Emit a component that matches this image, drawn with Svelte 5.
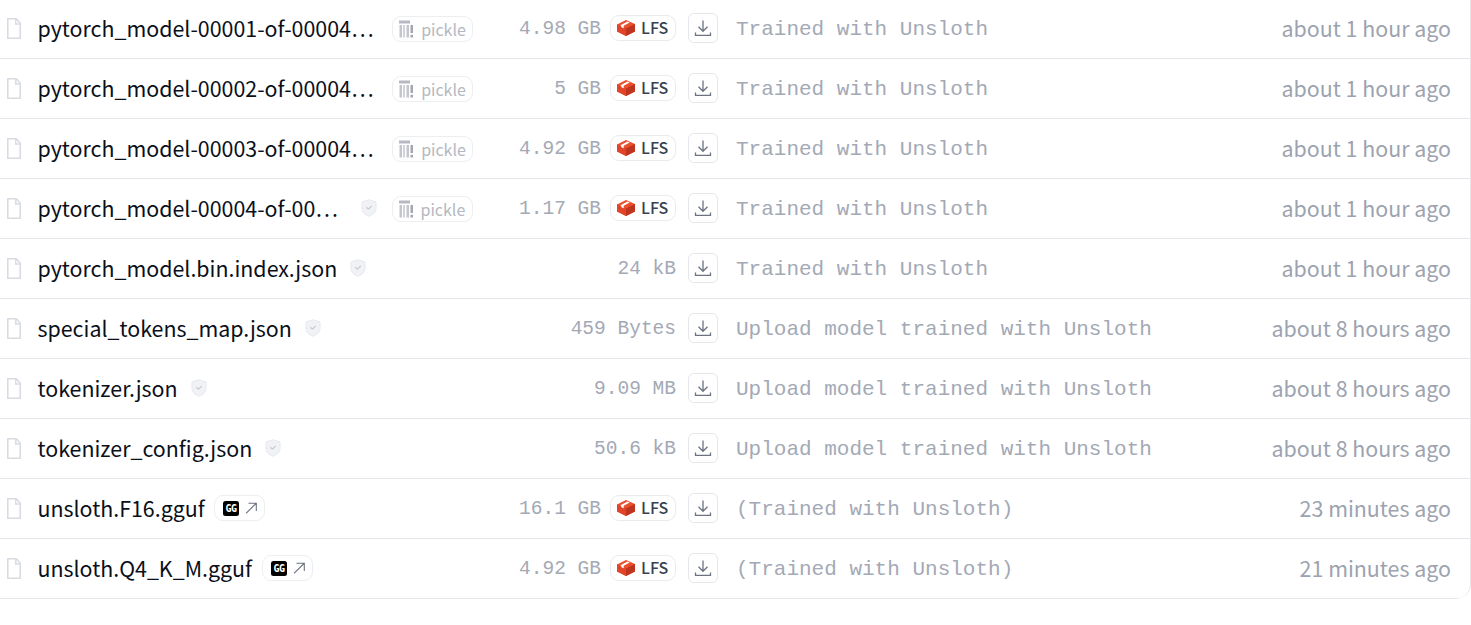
<script>
  const p = 'pickle', l = 'lfs', g = 'gguf';
  const h1 = 'about 1 hour ago', h8 = 'about 8 hours ago';
  const t1 = 'Trained with Unsloth', t8 = 'Upload model trained with Unsloth', t3 = '(Trained with Unsloth)';
  const rows = [
    { name: 'pytorch_model-00001-of-00004…', badge: p, size: '4.98 GB', lfs: true, msg: t1, date: h1 },
    { name: 'pytorch_model-00002-of-00004…', badge: p, size: '5 GB', lfs: true, msg: t1, date: h1 },
    { name: 'pytorch_model-00003-of-00004…', badge: p, size: '4.92 GB', lfs: true, msg: t1, date: h1 },
    { name: 'pytorch_model-00004-of-00…', shield: true, badge: p, size: '1.17 GB', lfs: true, msg: t1, date: h1 },
    { name: 'pytorch_model.bin.index.json', shield: true, size: '24 kB', msg: t1, date: h1 },
    { name: 'special_tokens_map.json', shield: true, size: '459 Bytes', msg: t8, date: h8 },
    { name: 'tokenizer.json', shield: true, size: '9.09 MB', msg: t8, date: h8 },
    { name: 'tokenizer_config.json', shield: true, size: '50.6 kB', msg: t8, date: h8 },
    { name: 'unsloth.F16.gguf', badge: g, size: '16.1 GB', lfs: true, msg: t3, date: '23 minutes ago' },
    { name: 'unsloth.Q4_K_M.gguf', badge: g, size: '4.92 GB', lfs: true, msg: t3, date: '21 minutes ago' }
  ];
</script>

<ul class="list">
  {#each rows as r}
    <li class="row">
      <div class="file">
        <svg class="doc" viewBox="0 0 14 21" width="14" height="21" fill="none">
          <path d="M.75.75h8.500l4 4.500v15h-12.500z" stroke="#d8dbe2" stroke-width="1.600" stroke-linejoin="round"/>
          <path d="M8.750 1v5h4.500" stroke="#d8dbe2" stroke-width="1.600"/>
        </svg>
        <span class="name">{r.name}</span>
        {#if r.shield}
          <svg class="shield" class:truncated={r.badge} viewBox="0 0 16 18" width="16" height="18">
            <path d="M8 .8l7 2.200v6c0 4-3 6.800-7 8.200-4-1.400-7-4.200-7-8.200V3z" fill="#f1f2f5" stroke="#e6e8ec"/>
            <path d="M5.300 8.300L7.300 10.200 10.800 7" fill="none" stroke="#c9ccd3" stroke-width="1.300"/>
          </svg>
        {/if}
        {#if r.badge === 'pickle'}
          <span class="badge pickle">
            <svg viewBox="0 0 14 18" width="14" height="18">
              <rect x="0" y="0.500" width="11" height="3" fill="#b6b9c1"/>
              <rect x="0.500" y="5" width="2.500" height="12.500" fill="#c3c6cd"/>
              <rect x="4" y="5" width="2" height="12.500" fill="#d0d3d9"/>
              <rect x="7.500" y="5" width="2.500" height="12.500" fill="#c3c6cd"/>
              <rect x="11.500" y="5" width="2.500" height="8" fill="#a3a7b0"/>
              <rect x="11.500" y="14.800" width="2.500" height="2.700" fill="#a3a7b0"/>
            </svg>
            pickle
          </span>
        {:else if r.badge === 'gguf'}
          <span class="badge gguf">
            <svg viewBox="0 0 16 15" width="16" height="15">
              <rect width="16" height="15" rx="2.500" fill="#000"/>
              <text x="8" y="11.200" text-anchor="middle" class="gg">GG</text>
            </svg>
            <svg viewBox="0 0 12 12" width="12" height="12" fill="none" stroke="#6b7280" stroke-width="1.100">
              <path d="M1 11.300L11 1.500M3.500 1.300h7.800v7.800"/>
            </svg>
          </span>
        {/if}
      </div>
      <div class="meta">
        <span class="size">{r.size}</span>
        {#if r.lfs}
          <span class="lfs">
            <svg viewBox="0 0 18 16" width="18" height="16">
              <path d="M0 4.500L9 0l9 4v7.500L9 16 0 11.500z" fill="#ea4f2e"/>
              <path d="M9 8.500L18 4v7.500L9 16z" fill="#bb351f"/>
              <path d="M0 4.500L9 8.500V16L0 11.500z" fill="#e2442a"/>
              <path d="M3.500 5.300L10.500 1.500l2.200 1-6 3.300v2.500L4.800 7.500z" fill="#fff"/>
            </svg>
            <span class="lfs-label">LFS</span>
          </span>
        {/if}
        <span class="dl">
          <svg viewBox="0 0 18 18" width="18" height="18" fill="none" stroke="#6b7280" stroke-width="1.300">
            <path d="M9 1.500v10.500M4.500 7.800L9 12.300l4.500-4.500M1.500 13.500v2.800h15v-2.800"/>
          </svg>
        </span>
      </div>
      <div class="msg">{r.msg}</div>
      <div class="date">{r.date}</div>
    </li>
  {/each}
</ul>

<style>
  :global(body) {
    margin: 0;
    background: #fff;
  }
  .list {
    list-style: none;
    margin: -1px 0 0;
    padding: 0;
    border-right: 1px solid #e5e7eb;
    border-bottom-right-radius: 15px;
    overflow: hidden;
    font-family: "Noto Sans CJK SC", "Noto Sans", sans-serif;
  }
  .row {
    display: flex;
    align-items: center;
    height: 58px;
    padding-bottom: 1px;
    border-bottom: 1px solid #e5e7eb;
    box-sizing: content-box;
  }
  .file {
    display: flex;
    align-items: center;
    width: 480px;
    flex: none;
    padding-left: 7px;
    box-sizing: border-box;
    min-width: 0;
  }
  .doc {
    flex: none;
    margin-right: 16.500px;
  }
  .name {
    padding-bottom: 2px;
    font-size: 21.400px;
    color: #0b0f19;
    white-space: nowrap;
  }
  .shield {
    flex: none;
    margin-left: 13px;
  }
  .shield.truncated {
    margin-left: 22.500px;
  }
  .badge {
    display: inline-flex;
    align-items: center;
    height: 26px;
    box-sizing: border-box;
    border: 1px solid #eceef1;
    border-radius: 9px;
    font-size: 16px;
    color: #b4b8c0;
  }
  .pickle {
    width: 81px;
    margin-left: 15px;
    margin-top: 2px;
    padding-left: 6px;
    gap: 8px;
  }
  .name + .pickle {
    margin-left: 18.500px;
  }
  .gguf {
    width: 51px;
    padding-left: 8px;
    gap: 6px;
    margin-left: 9.500px;
  }
  .gg {
    font-family: "DejaVu Sans Mono", monospace;
    font-weight: 700;
    font-size: 10px;
    letter-spacing: -0.500px;
    fill: #fff;
  }
  .meta {
    display: flex;
    align-items: center;
    justify-content: flex-end;
    width: 238px;
    flex: none;
  }
  .size {
    font-family: "Liberation Mono", monospace;
    font-size: 19.500px;
    padding-top: 2px;
    color: #a3a9b5;
    white-space: nowrap;
  }
  .lfs {
    display: inline-flex;
    align-items: center;
    gap: 6px;
    width: 66px;
    height: 26px;
    box-sizing: border-box;
    padding-left: 6px;
    margin-left: 9px;
    border: 1px solid #e9ebee;
    border-radius: 9px;
    font-size: 16px;
    font-weight: 500;
    color: #374151;
  }
  .lfs-label {
    padding-bottom: 2px;
  }
  .dl {
    display: inline-flex;
    align-items: center;
    justify-content: center;
    width: 30px;
    height: 30px;
    box-sizing: border-box;
    margin-left: 12px;
    border: 1px solid #e5e7eb;
    border-radius: 6px;
  }
  .msg {
    margin-left: 18px;
    padding-top: 2px;
    font-family: "Liberation Mono", monospace;
    font-size: 21px;
    color: #a3a9b5;
    white-space: nowrap;
  }
  .date {
    margin-left: auto;
    padding-right: 19px;
    padding-bottom: 2px;
    font-size: 21.400px;
    color: #9ca3af;
    white-space: nowrap;
  }
</style>
